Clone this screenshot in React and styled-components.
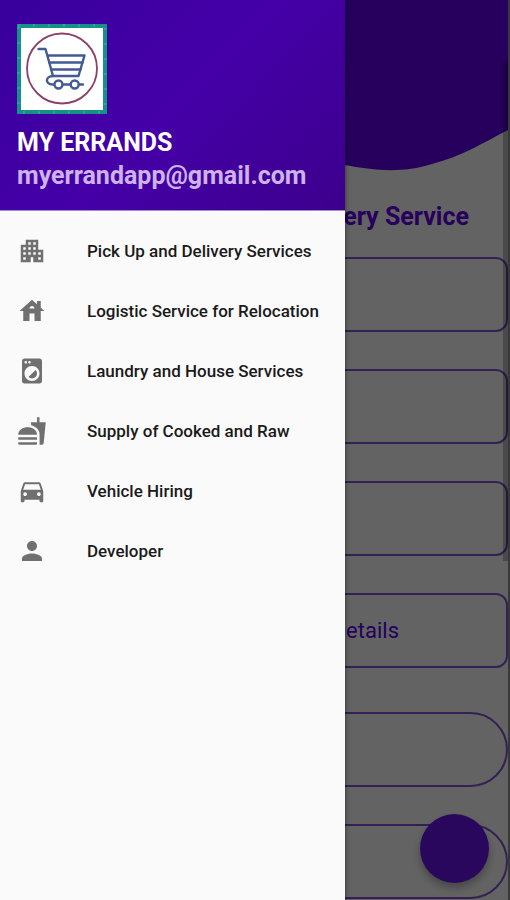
import styled, { createGlobalStyle } from "styled-components";
import {
  MdApartment,
  MdDirectionsCar,
  MdFastfood,
  MdHouse,
  MdLocalLaundryService,
  MdPerson,
} from "react-icons/md";

const GlobalStyle = createGlobalStyle`
  * {
    box-sizing: border-box;
  }
  body {
    margin: 0;
    background: #fff;
    font-family: Roboto, "Liberation Sans", sans-serif;
  }
`;

const Screen = styled.div`
  position: relative;
  min-height: 100vh;
  overflow: hidden;
  border-right: 2px solid #383838;
`;

const Wave = styled.svg`
  display: block;
  width: 100%;
  height: 172px;
`;

const Title = styled.h1`
  margin: 0;
  padding: 28px 39px 24px 0;
  font-size: 25px;
  line-height: 33px;
  font-weight: 700;
  text-align: right;
  color: #6200ee;
`;

const Options = styled.div`
  display: flex;
  flex-direction: column;
  gap: 37px;
`;

const Pills = styled(Options)`
  margin-top: 44px;
`;

const Option = styled.button`
  width: 100%;
  height: 75px;
  padding: 0 107px 0 0;
  border: 2px solid #8257d4;
  border-radius: ${(props) => (props.$round ? "38px" : "12px")};
  background: none;
  font-family: inherit;
  font-size: 22px;
  text-align: right;
  color: #6200ee;
`;

const Fab = styled.button`
  position: absolute;
  right: 19px;
  bottom: 17px;
  width: 69px;
  height: 69px;
  border: none;
  border-radius: 50%;
  background: #6a14ee;
  box-shadow: 0 5px 9px rgba(0, 0, 0, 0.3);
`;

const Scrim = styled.div`
  position: absolute;
  inset: 0;
  background: rgba(0, 0, 0, 0.61);
`;

const ScrollThumb = styled.div`
  position: absolute;
  top: 62px;
  right: 0;
  width: 5px;
  height: 499px;
  background: rgba(0, 0, 0, 0.25);
`;

const Drawer = styled.aside`
  position: absolute;
  top: 0;
  bottom: 0;
  left: 0;
  width: 68%;
  background: #fafafa;
  box-shadow: 0 0 5px rgba(0, 0, 0, 0.5);
`;

const DrawerHeader = styled.header`
  height: 211px;
  padding: 24px 17px 0;
  border-bottom: 1px solid #a58bd0;
  background: linear-gradient(135deg, #38009c 0%, #4500a8 50%, #3c008c 100%);
`;

const Logo = styled.svg`
  display: block;
  width: 90px;
  height: 90px;
`;

const Name = styled.h2`
  margin: 12px 0 0;
  font-size: 25px;
  line-height: 33px;
  font-weight: 700;
  color: #fff;
`;

const Email = styled.p`
  margin: 0;
  font-size: 25px;
  line-height: 33px;
  font-weight: 700;
  color: #cdb2ec;
`;

const Menu = styled.nav`
  display: flex;
  flex-direction: column;
  padding-top: 10px;
`;

const MenuItem = styled.a`
  display: flex;
  align-items: center;
  gap: 40px;
  height: 60px;
  padding-left: 17px;
  font-size: 17px;
  font-weight: 500;
  line-height: 24px;
  white-space: nowrap;
  color: #1a1a1a;
  text-decoration: none;

  svg {
    flex: none;
    width: 30px;
    height: 30px;
    color: #707070;
  }
`;

const menu = [
  { label: "Pick Up and Delivery Services", Icon: MdApartment },
  { label: "Logistic Service for Relocation", Icon: MdHouse },
  { label: "Laundry and House Services", Icon: MdLocalLaundryService },
  { label: "Supply of Cooked and Raw", Icon: MdFastfood },
  { label: "Vehicle Hiring", Icon: MdDirectionsCar },
  { label: "Developer", Icon: MdPerson },
];

const CartLogo = () => (
  <Logo viewBox="0 0 90 90" role="img" aria-label="My Errands">
    <rect width="90" height="90" fill="#16918a" />
    <rect
      x="1.5"
      y="1.5"
      width="87"
      height="87"
      fill="none"
      stroke="#4bb0a6"
      strokeWidth="3"
      strokeDasharray="1 14"
    />
    <rect x="4" y="4" width="82" height="82" fill="#fff" />
    <circle cx="45" cy="44.5" r="35" fill="none" stroke="#8c3f68" strokeWidth="1.8" />
    <g fill="none" stroke="#435a94" strokeWidth="2.4" strokeLinecap="round" strokeLinejoin="round">
      <path d="M21.5 25H28.5L36 52H61.5L67.5 31.5H31" />
      <path d="M32.5 38.5H65.5M34.5 45.5H63.5" />
      <path d="M36 52C28 52 28 60.5 35.5 60.5H37M45.5 60.5H53.5M62 60.5H66" />
      <circle cx="41.5" cy="60.5" r="4" />
      <circle cx="57.7" cy="60.5" r="4" />
    </g>
  </Logo>
);

const App = () => {
  return (
    <>
      <GlobalStyle />
      <Screen>
        <main>
          <Wave viewBox="0 0 508 172" preserveAspectRatio="none" aria-hidden="true">
            <path
              d="M0 0H508V130C483 143 462 156 432 164C401 174 371 170 345 165C230 140 130 90 0 130Z"
              fill="#6200ee"
            />
          </Wave>
          <Title>Delivery Service</Title>
          <Options>
            <Option aria-label="Pick up" />
            <Option aria-label="Drop off" />
            <Option aria-label="Item" />
            <Option>Details</Option>
          </Options>
          <Pills>
            <Option $round aria-label="Continue" />
            <Option $round aria-label="Cancel" />
          </Pills>
        </main>
        <Fab aria-label="Contact" />
        <Scrim />
        <ScrollThumb />
        <Drawer>
          <DrawerHeader>
            <CartLogo />
            <Name>MY ERRANDS</Name>
            <Email>myerrandapp@gmail.com</Email>
          </DrawerHeader>
          <Menu>
            {menu.map(({ label, Icon }) => (
              <MenuItem key={label} href="#">
                <Icon aria-hidden="true" />
                {label}
              </MenuItem>
            ))}
          </Menu>
        </Drawer>
      </Screen>
    </>
  );
};

export default App;
